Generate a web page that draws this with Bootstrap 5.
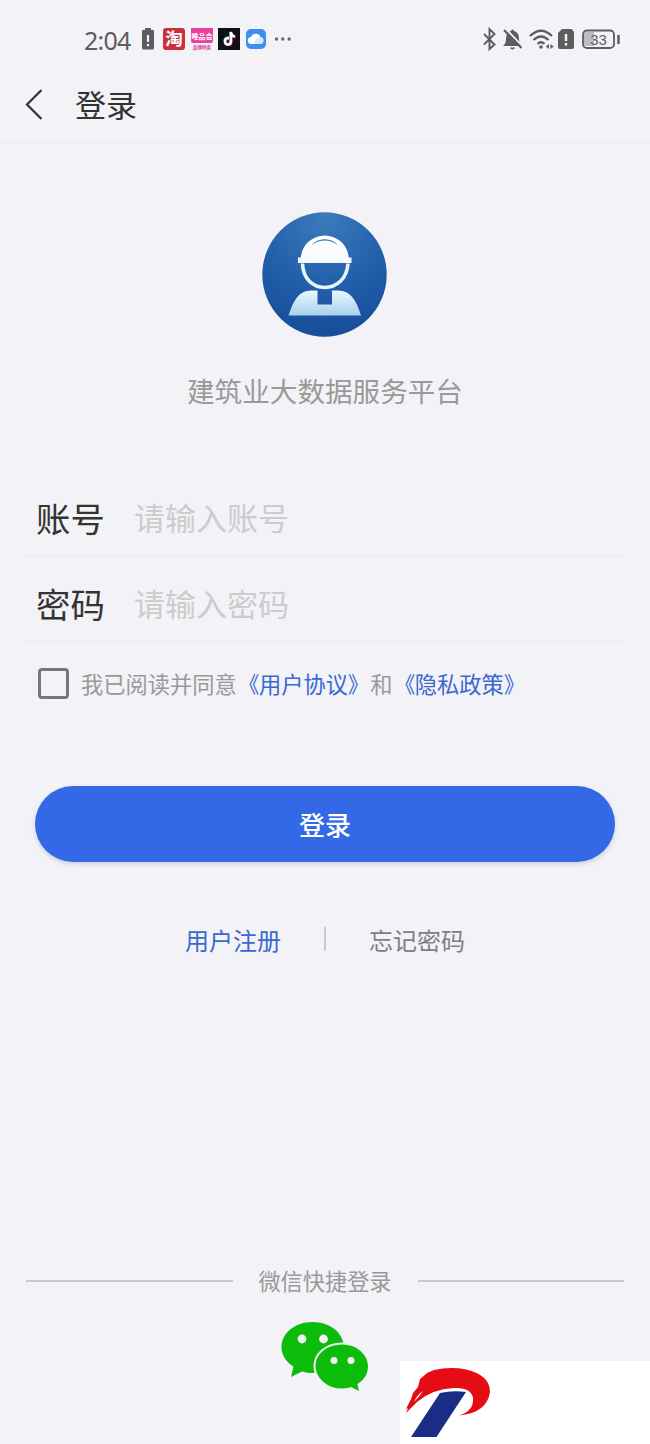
<!DOCTYPE html>
<html lang="zh-CN">
<head>
<meta charset="utf-8">
<meta name="viewport" content="width=device-width, initial-scale=1">
<title>登录</title>
<link href="https://cdn.jsdelivr.net/npm/bootstrap@5.3.0/dist/css/bootstrap.min.css" rel="stylesheet">
<style>
body{background:#f2f2f7;font-family:"Noto Sans CJK SC",sans-serif;color:#333;overflow:hidden}
svg{display:block;flex:none}
.screen{height:1444px;width:650px}
.status{height:78px;padding:0 29px 0 84px}
.clock{font:25px/30px "Noto Sans",sans-serif;color:#5d5d60;width:54px;letter-spacing:-.8px;padding-top:2px}
.topbar{height:65px;padding:0 0 13px 25px;border-bottom:1px solid #ececf0}
.topbar h1{font-size:31px;line-height:40px;font-weight:400;margin:0 0 0 32px}
.brand{padding-top:69px}
.brand svg{margin-right:2px}
.brand p{font-size:27.6px;line-height:40px;color:#999;margin:33px 0 0}
.fields{padding:0 26px;margin-top:60px}
.field{height:86px;padding:8px 10px 0;border-bottom:1px solid #e9e9ed}
.field label{font-size:34.4px;line-height:50px;width:98px;flex:none}
.field input{font-size:31px;line-height:46px;height:46px;color:#333;padding:0}
.field input::placeholder{color:#ccc;opacity:1}
.agree{padding-left:38px;margin-top:25px;height:32px;font-size:22.25px;line-height:32px;color:#999}
.agree .form-check-input{width:31px;height:31px;border:3px solid #77777b;border-radius:4px;background-color:transparent;margin:0 12px 0 0}
.blue{color:#3a68cf;text-decoration:none}
.ql,.qr{display:inline-block;transform:scaleX(.92);transform-origin:100% 50%}
.qr{transform-origin:0 50%}
.go{margin:87px 35px 0;height:76px;background:#3369e7;font-size:26px;font-weight:500;line-height:40px;box-shadow:0 2px 4px rgba(70,90,140,.22)}
.links{margin-top:60px;height:36px;font-size:24px;line-height:36px}
.links .bar{width:2px;height:24px;background:#cacace;margin:-2px 43px 0 43px}
.forgot{color:#808083;text-decoration:none}
.quick{margin:305px 26px 0;height:36px;font-size:22.2px;line-height:36px;color:#999}
.quick span{margin-top:-2px}
.quick hr{margin:0;opacity:1;border-top:2px solid #c9c9cd;width:206.5px}
.wechat{margin-top:22px}
.corner{right:0;bottom:0;width:250px;height:83px}
</style>
</head>
<body>
<main class="screen position-relative d-flex flex-column">
  <div class="status d-flex align-items-center">
    <span class="clock">2:04</span>
    <svg width="20" height="24" viewBox="0 0 20 24"><path d="M7 1h6v2h2q1 0 1 1v17q0 1.500-1.500 1.500h-9Q4 22.500 4 21V4q0-1 1-1h2z" fill="#5d5d60"/><path d="M10 8v7M10 17v2.300" stroke="#f2f2f7" stroke-width="2.200"/></svg>
    <svg class="ms-1 overflow-visible" width="24" height="24" viewBox="0 0 24 24"><rect x="1" y="1" width="22" height="22" rx="3" fill="#c9303a"/><text x="12" y="18.300" font-size="17.500" font-weight="700" text-anchor="middle" fill="#fff">淘</text></svg>
    <svg class="ms-1 overflow-visible" width="24" height="24" viewBox="0 0 24 24"><path d="M1 1h22v13q0 2-2 2H3q-2 0-2-2z" fill="#eb3fa0"/><text x="12" y="12" font-size="7" font-weight="700" text-anchor="middle" fill="#fff">唯品会</text><text x="12" y="21.500" font-size="4.600" font-weight="700" text-anchor="middle" fill="#dc3995">品牌特卖</text></svg>
    <svg class="ms-1" width="22" height="24" viewBox="0 0 22 24"><path d="M0 1h22v22H0z" fill="#101019"/><g fill="none" stroke-width="2.300"><path d="M10.500 10.500q-4 .2-4 3.600 0 3 2.800 3 3 0 3-3V5q.5 4 4 4.200" stroke="#31d3cf"/><path d="M11.800 11.300q-4 .2-4 3.600 0 3 2.800 3 3 0 3-3V6q.5 3.500 4 4" stroke="#ef3554"/><path d="M11 11q-4 0-4 3.500 0 3 2.800 3 3.200 0 3.200-3V5q.5 4.200 4 4.500" stroke="#fff"/></g></svg>
    <svg class="ms-1" width="24" height="24" viewBox="0 0 24 24"><rect x="2" y="2" width="20" height="20" rx="5" fill="#3f8eeb"/><path d="M7.500 17a3.500 3.500 0 0 1-.4-7A5 5 0 0 1 16.500 10a3.600 3.600 0 0 1 .3 7z" fill="#fff"/><path d="M10 17q1-6 6.500-7a3.600 3.600 0 0 1 .3 7z" fill="#d4e8fd"/></svg>
    <svg width="26" height="24" viewBox="0 0 26 24" fill="#68686b"><circle cx="8.500" cy="12" r="1.700"/><circle cx="14.800" cy="12" r="1.700"/><circle cx="21.200" cy="12" r="1.700"/></svg>
    <svg class="ms-auto" width="142" height="26" viewBox="0 0 142 26" fill="none" stroke="#5d5d60">
      <path d="M5 8l10.500 10.500-5 4.500V3l5 5L5 18.500" stroke-width="1.900"/>
      <path d="M24 20q3-2 3-7 0-7 5-8 0-1.500 1.500-1.500T35 5q5 1 5 8 0 5 3 7zM31 21.500h5q-.4 2-2.500 2t-2.500-2z" fill="#5d5d60" stroke="none"/><path d="M26.500 2.500l18 19" stroke="#f2f2f7" stroke-width="2"/><path d="M25 4l17.500 18" stroke-width="2.200"/>
      <path d="M51 10q11-10.500 22 0M54.500 14q7.500-7 15 0M58.500 17.800q3.500-3 7 0" stroke-width="2.300"/><circle cx="62" cy="21" r="1.800" fill="#5d5d60" stroke="none"/><path d="M70 18v5l-3.300-2.500zM71.500 18v5l3.300-2.500z" fill="#5d5d60" stroke="none"/>
      <path d="M83 3h9.500l2.500 3v15q0 2-2 2H81q-2 0-2-2V7z" fill="#5d5d60" stroke="none"/><path d="M87 8v7M87 17v2.400" stroke="#f2f2f7" stroke-width="2.400"/>
      <path d="M107 6h8v14h-8q-2 0-2-2V8q0-2 2-2z" fill="#bdbdc1" stroke="none"/><rect x="104" y="4.500" width="31" height="17.500" rx="4" stroke-width="1.800"/><path d="M139.500 9v9" stroke-width="2.500"/><text x="119.500" y="18.500" font-size="15" text-anchor="middle" font-family="Liberation Sans, sans-serif" fill="#5d5d60" stroke="none">33</text>
    </svg>
  </div>

  <header class="topbar d-flex align-items-center">
    <svg width="18" height="32" viewBox="0 0 18 32"><path d="M16.500 2L2 16.500 16.500 31" fill="none" stroke="#333" stroke-width="2.200"/></svg>
    <h1>登录</h1>
  </header>

  <section class="brand d-flex flex-column align-items-center">
    <svg width="125" height="125" viewBox="0 0 125 125">
      <defs><radialGradient id="sky" cx=".5" cy=".05" r=".95"><stop stop-color="#3b7bbb"/><stop offset=".55" stop-color="#2360ab"/><stop offset="1" stop-color="#174d9b"/></radialGradient><linearGradient id="ice" gradientUnits="userSpaceOnUse" x1="0" y1="22" x2="0" y2="104"><stop stop-color="#fff"/><stop offset=".7" stop-color="#e9f6fd"/><stop offset="1" stop-color="#a5d1ec"/></linearGradient></defs>
      <circle cx="62.500" cy="62.500" r="62.200" fill="url(#sky)"/>
      <path d="M36 45.500h2.800A24 23.500 0 0 1 86.700 45.500h2.800v5.500H36z" fill="url(#ice)"/>
      <path d="M49.500 33.500A17 17 0 0 1 76 33.500 20 20 0 0 0 49.500 33.500z" fill="#2b68ad"/>
      <path d="M40.500 51.500C41 67 51 75.500 62.700 75.500S85 67 86 51.500" fill="none" stroke="#e6f4fc" stroke-width="3.600"/>
      <path d="M26.500 103.500C32 87 37 79 49 78.500h6.500v14H70v-14h6.500C88 79 94 87 99 103.500z" fill="url(#ice)"/>
    </svg>
    <p>建筑业大数据服务平台</p>
  </section>

  <form class="d-flex flex-column">
    <div class="fields">
      <div class="field d-flex align-items-center"><label for="user">账号</label><input id="user" class="form-control-plaintext" type="text" placeholder="请输入账号"></div>
      <div class="field d-flex align-items-center"><label for="pass">密码</label><input id="pass" class="form-control-plaintext" type="password" placeholder="请输入密码"></div>
    </div>
    <div class="agree d-flex align-items-center text-nowrap"><input class="form-check-input" type="checkbox" aria-label="同意协议"><span>我已阅读并同意<a class="blue" href="#"><span class="ql">《</span>用户协议<span class="qr">》</span></a>和<a class="blue" href="#"><span class="ql">《</span>隐私政策<span class="qr">》</span></a></span></div>
    <button type="button" class="go btn btn-primary border-0 rounded-pill">登录</button>
  </form>

  <nav class="links d-flex justify-content-center align-items-center">
    <a class="blue" href="#">用户注册</a><span class="bar"></span><a class="forgot" href="#">忘记密码</a>
  </nav>

  <div class="quick d-flex align-items-center justify-content-between"><hr><span>微信快捷登录</span><hr></div>
  <div class="wechat d-flex justify-content-center">
    <svg width="88" height="72" viewBox="0 0 88 72">
      <g fill="#0dbb0b"><path d="M31.500 1C14 1 .5 12 .5 26c0 8 4.500 15 12 19.500L10 56l11-5.500q5 1.500 10.500 1.500C49 52 63 41 63 26.500S49 1 31.500 1z"/>
      <path d="M61 22.500c-15.500 0-27.500 10-27.500 22.500S45.500 68.500 61 68.500q5 0 9-1.300L79.500 72l-2-8.500c6.500-4 10.500-10.500 10.500-18C88 32.500 76 22.500 61 22.500z" stroke="#f2f2f7" stroke-width="2"/></g>
      <g fill="#f2f2f7"><circle cx="21" cy="18" r="4.400"/><circle cx="42.500" cy="18" r="4.400"/><circle cx="53" cy="39.500" r="3.500"/><circle cx="70" cy="39.500" r="3.500"/></g>
    </svg>
  </div>

  <div class="corner position-absolute bg-white">
    <svg width="95" height="83" viewBox="0 0 95 83">
      <path d="M40 32q13-3 26-1L36.500 76H11z" fill="#1b2c87"/>
      <path d="M6 48L11 38 13 32 18 26 20 18 26 13 27 12 34 9Q50 5.500 66 8.500 90 14 90 31 87 52 59 54.500 74 50 73 37 71 26 54 27 32 28 17 41L6 52 8 47z" fill="#e60c14"/><path d="M14 41q3-7 9-11-3 5-9 11z" fill="#fff"/>
    </svg>
  </div>
</main>
<script src="https://cdn.jsdelivr.net/npm/bootstrap@5.3.0/dist/js/bootstrap.bundle.min.js"></script>
</body>
</html>
